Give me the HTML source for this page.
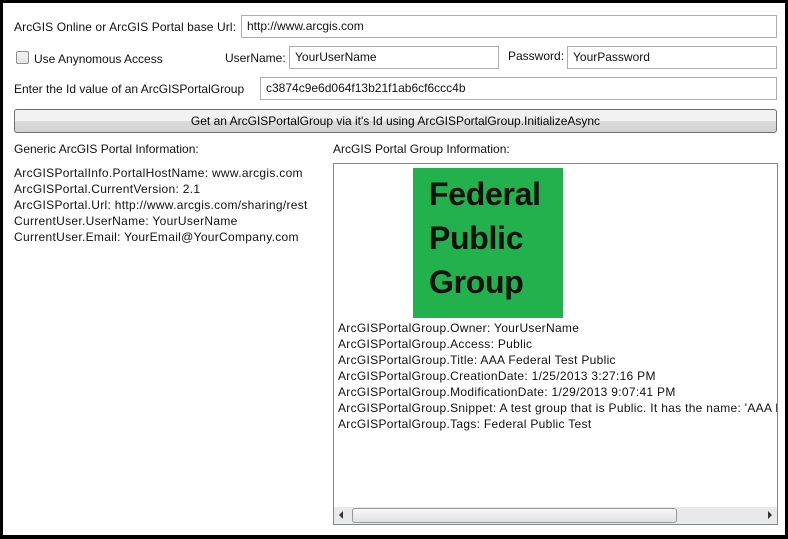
<!DOCTYPE html>
<html><head><style>
*{box-sizing:border-box;margin:0;padding:0}
body{width:788px;height:539px;background:#000;font-family:"Liberation Sans",sans-serif;font-size:12px;color:#111;position:relative;overflow:hidden}
#w{position:absolute;left:3px;top:3px;width:782px;height:532px;background:#fff}
.a{position:absolute;white-space:nowrap}
.in{position:absolute;border:1px solid #abadb3;background:#fff;padding:3px 5px;height:23px;line-height:15px}
.sp{letter-spacing:0.3px}
</style></head><body>
<div id="w"></div>
<div class="a" style="left:14px;top:20px;letter-spacing:0.1px">ArcGIS Online or ArcGIS Portal base Url:</div>
<div class="in" style="left:241px;top:15px;width:536px">http://www.arcgis.com</div>
<div class="a" style="left:16px;top:51px;width:13px;height:13px;border:1px solid #8f8f8f;border-radius:2px;background:linear-gradient(#f4f4f4,#e4e4e4)"></div>
<div class="a" style="left:34px;top:52px">Use Anynomous Access</div>
<div class="a" style="left:225px;top:51px">UserName:</div>
<div class="in" style="left:289px;top:46px;width:210px">YourUserName</div>
<div class="a" style="left:508px;top:49px">Password:</div>
<div class="in" style="left:567px;top:46px;width:210px">YourPassword</div>
<div class="a" style="left:14px;top:82px">Enter the Id value of an ArcGISPortalGroup</div>
<div class="in" style="left:260px;top:77px;width:517px">c3874c9e6d064f13b21f1ab6cf6ccc4b</div>
<div class="a" style="left:14px;top:109px;width:763px;height:24px;border:1px solid #707070;border-radius:3px;background:linear-gradient(#f2f2f2 50%,#dcdcdc 50%,#d0d0d0);text-align:center;line-height:22px;color:#000">Get an ArcGISPortalGroup via it's Id using ArcGISPortalGroup.InitializeAsync</div>
<div class="a" style="left:14px;top:142px">Generic ArcGIS Portal Information:</div>
<div class="a sp" style="left:14px;top:165px;line-height:16px">ArcGISPortalInfo.PortalHostName: www.arcgis.com<br>ArcGISPortal.CurrentVersion: 2.1<br>ArcGISPortal.Url: http://www.arcgis.com/sharing/rest<br>CurrentUser.UserName: YourUserName<br>CurrentUser.Email: YourEmail@YourCompany.com</div>
<div class="a" style="left:333px;top:142px">ArcGIS Portal Group Information:</div>
<div class="a" style="left:333px;top:163px;width:445px;height:362px;border:1px solid #828790;overflow:hidden">
<div class="a" style="left:79px;top:4px;width:150px;height:150px;background:#22b14c;color:#111;font-weight:bold;font-size:32px;line-height:44px;padding:4px 0 0 16px;letter-spacing:-0.3px">Federal<br>Public<br>Group</div>
<div class="a sp" style="left:4px;top:156px;line-height:16px">ArcGISPortalGroup.Owner: YourUserName<br>ArcGISPortalGroup.Access: Public<br>ArcGISPortalGroup.Title: AAA Federal Test Public<br>ArcGISPortalGroup.CreationDate: 1/25/2013 3:27:16 PM<br>ArcGISPortalGroup.ModificationDate: 1/29/2013 9:07:41 PM<br>ArcGISPortalGroup.Snippet: A test group that is Public. It has the name: 'AAA Federal<br>ArcGISPortalGroup.Tags: Federal Public Test</div>
<div class="a" style="left:0;top:343px;width:443px;height:17px;background:#e9e9e9">
<div class="a" style="left:5px;top:4px;width:0;height:0;border:4px solid transparent;border-right:4px solid #333;border-left:0"></div>
<div class="a" style="left:18px;top:1px;width:325px;height:15px;border:1px solid #999;border-radius:3px;background:linear-gradient(#f8f8f8,#e2e2e2)"></div>
<div class="a" style="left:434px;top:4px;width:0;height:0;border:4px solid transparent;border-left:4px solid #333;border-right:0"></div>
</div>
</div>
</body></html>
